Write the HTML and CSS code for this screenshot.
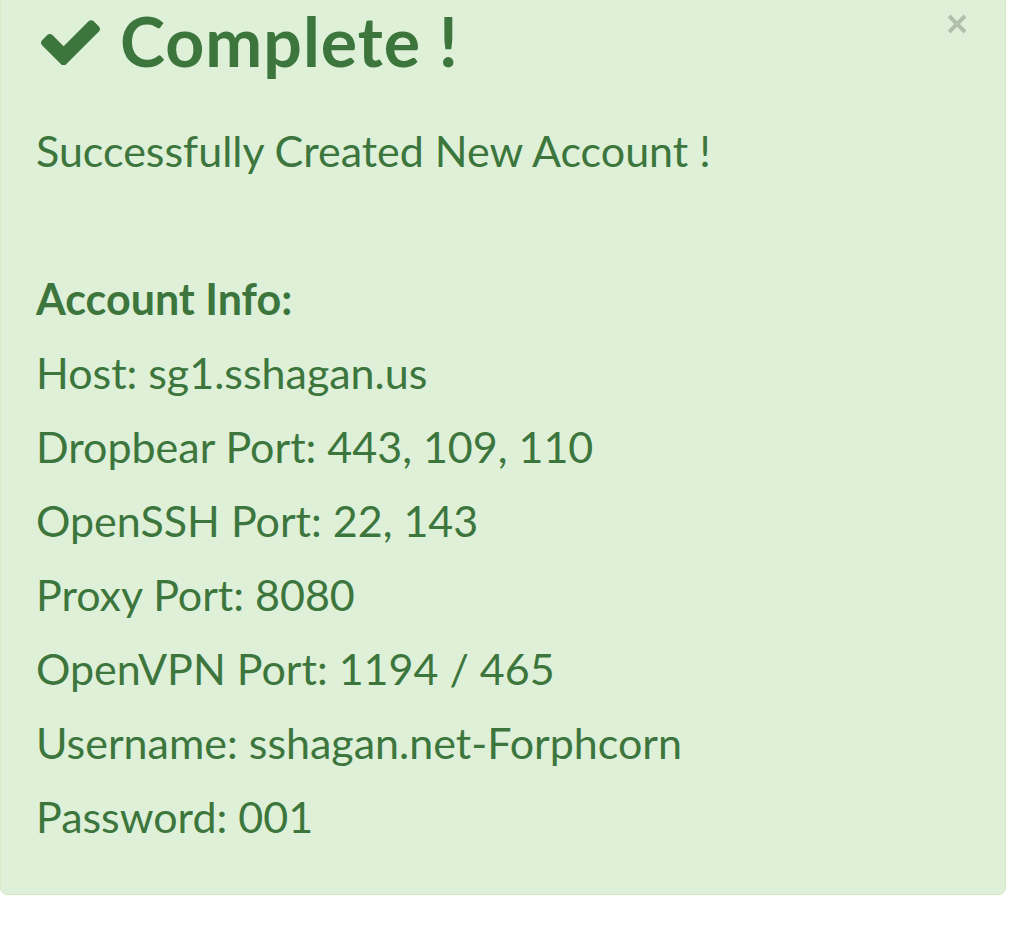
FILE: index.html
```html
<!DOCTYPE html>
<html lang="en">
<head>
  <meta charset="UTF-8">
  <title>Account Created</title>
  <link rel="stylesheet" href="styles.css">
</head>
<body>
  <div class="alert alert-success">
    <button type="button" class="close" aria-label="Close">
      <svg viewBox="0 0 22 22" width="22" height="22">
        <path d="M3 3 L19 19 M19 3 L3 19" />
      </svg>
    </button>
    <h4 class="alert-title">
      <svg class="check" viewBox="121 290 1550 1210" width="59" height="47">
        <path d="M1671 566q0 40-28 68l-724 724-136 136q-28 28-68 28t-68-28l-136-136-362-362q-28-28-28-68t28-68l136-136q28-28 68-28t68 28l294 295 656-657q28-28 68-28t68 28l136 136q28 28 28 68z" />
      </svg>
      Complete !
    </h4>
    <p class="alert-body">
      Successfully Created New Account !<br>
      <br>
      <strong>Account Info:</strong><br>
      Host: sg1.sshagan.us<br>
      Dropbear Port: 443, 109, 110<br>
      OpenSSH Port: 22, 143<br>
      Proxy Port: 8080<br>
      OpenVPN Port: 1194 / 465<br>
      Username: sshagan.net-Forphcorn<br>
      Password: 001
    </p>
  </div>
</body>
</html>
```

FILE: styles.css
```css
body {
  margin: 0;
  background: #fff;
  font-family: Lato, "Open Sans", sans-serif;
  color: #3c763d;
}

.alert {
  position: relative;
  margin: -20px 26px 0 0;
  padding: 23px 35px 40px 35px;
  background-color: #dff0d8;
  border: 1px solid #d6e9c6;
  border-radius: 7px;
}

.alert-title {
  display: flex;
  align-items: center;
  gap: 20px;
  margin: 0 0 35px;
  font-size: 68px;
  font-weight: 700;
  letter-spacing: 1px;
  line-height: 1.1;
  color: #3c763d;
}

.check {
  fill: #3c763d;
  flex: none;
  margin-left: 5px;
}

.alert-body {
  margin: 0;
  font-size: 43px;
  line-height: 74px;
}

.alert-body strong {
  font-weight: 700;
}

.close {
  position: absolute;
  top: 32px;
  right: 37px;
  padding: 0;
  border: 0;
  background: transparent;
  cursor: pointer;
  opacity: 0.2;
}

.close svg {
  display: block;
  stroke: #000;
  stroke-width: 4;
  filter: drop-shadow(0 1px 0 #fff);
}
```
